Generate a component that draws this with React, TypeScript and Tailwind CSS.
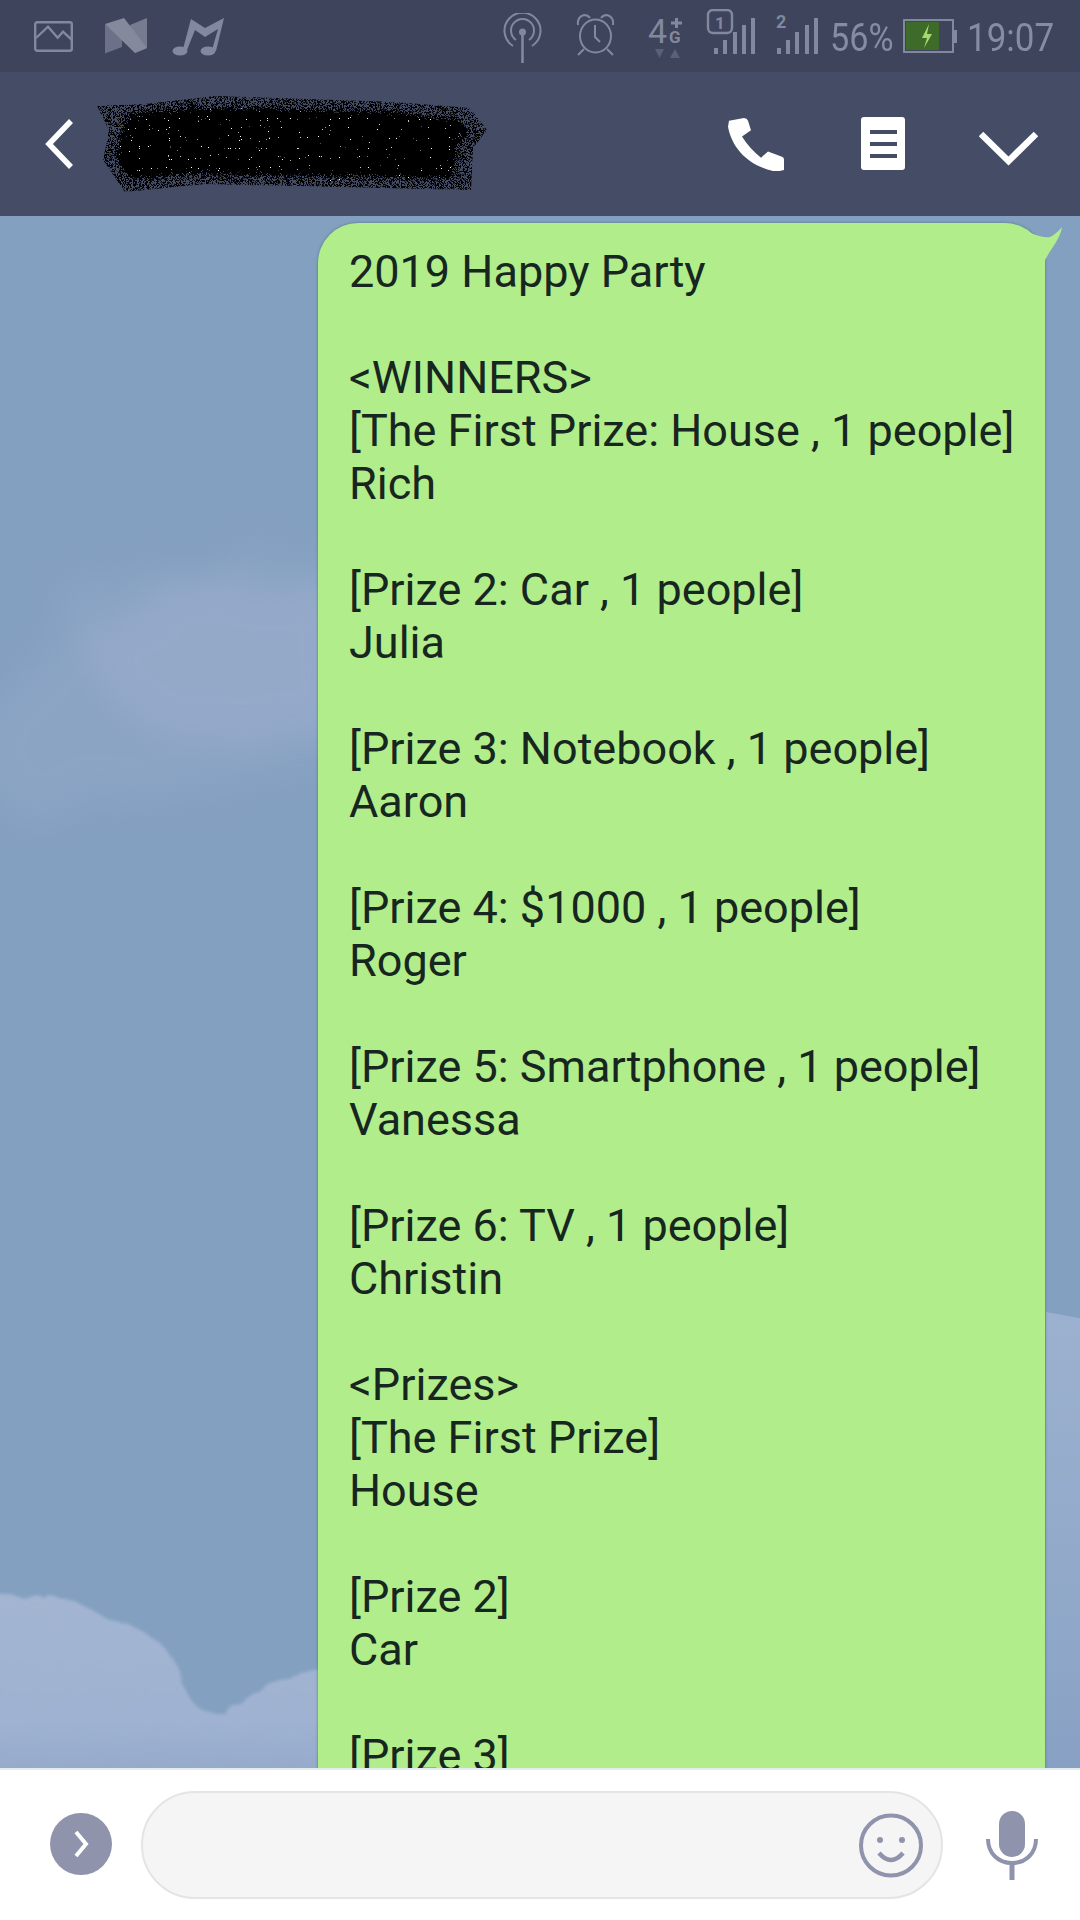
const ICON = '#82889d';

const MESSAGE = `2019 Happy Party

<WINNERS>
[The First Prize: House , 1 people]
Rich

[Prize 2: Car , 1 people]
Julia

[Prize 3: Notebook , 1 people]
Aaron

[Prize 4: $1000 , 1 people]
Roger

[Prize 5: Smartphone , 1 people]
Vanessa

[Prize 6: TV , 1 people]
Christin

<Prizes>
[The First Prize]
House

[Prize 2]
Car

[Prize 3]`;

function SignalBars({ xs, tops, bottom }: { xs: number[]; tops: number[]; bottom: number }) {
  return (
    <>
      {xs.map((x, i) => (
        <rect key={x} x={x} y={tops[i]} width="4" height={bottom - tops[i]} />
      ))}
    </>
  );
}

function StatusBar() {
  return (
    <div className="flex h-[72px] shrink-0 items-start bg-[#3e445b] pl-[34px] text-[#868ca1]">
      <svg className="mt-[21px]" width="39" height="31" viewBox="0 0 39 31" fill="none" stroke={ICON} strokeWidth="2.4">
        <rect x="1.2" y="1.2" width="36.6" height="28.6" rx="2" />
        <path d="M2 17 L14 5.7 L23.7 16.7 L29 10.7 L38 19" />
      </svg>
      <svg className="mt-[18px] ml-[32px]" width="43" height="36" viewBox="0 0 43 36">
        <path d="M25 7 L42 0 L42 30 L30 35 Z" fill="#767b90" />
        <path d="M0 6 L17 20 L17 29 L0 35.5 Z" fill="#6c7187" />
        <path d="M0 6 L19 0 L42 30 L30 35 Z" fill="#84899c" />
      </svg>
      <svg className="mt-[18px] ml-[24px]" width="52" height="38" viewBox="0 0 52 38" fill={ICON}>
        <ellipse cx="8" cy="33" rx="7.5" ry="4.5" />
        <ellipse cx="36" cy="33" rx="7.5" ry="4.5" />
        <path d="M11 31 L19 1 L33 10 L52 0 L44 33 L40 32 L46 11 L33 19 L23 12 L15 32 Z" />
      </svg>
      <svg className="mt-[13px] ml-[279px]" width="39" height="50" viewBox="0 0 39 50" fill="none" stroke={ICON} strokeWidth="2">
        <path d="M10 33 A18 18 0 1 1 29 33" />
        <path d="M13 27 A11.5 11.5 0 1 1 26 27" />
        <circle cx="19.5" cy="19" r="3.5" fill={ICON} stroke="none" />
        <path d="M19.5 20 L19.5 50" strokeWidth="2.6" />
      </svg>
      <svg className="mt-[14px] ml-[34px]" width="39" height="42" viewBox="0 0 39 42" fill="none" stroke={ICON} strokeWidth="2">
        <ellipse cx="19.5" cy="22" rx="15.5" ry="16.5" />
        <path d="M19 11 L19 23 L24 28" />
        <path d="M2 11 Q1 3 8 1 Q12 1 14 4 M37 11 Q38 3 31 1 Q27 1 25 4" />
        <path d="M8 35 L2 41 M31 35 L37 41" />
      </svg>
      <svg className="mt-[10px] ml-[33px]" width="37" height="50" viewBox="0 -8 37 50" fill={ICON}>
        <text x="0" y="25" fontFamily="Roboto, sans-serif" fontSize="34">4</text>
        <text x="21" y="25" fontFamily="Roboto, sans-serif" fontSize="17" fontWeight="700">G</text>
        <path d="M27 0 h3 v3.5 h4 v3 h-4 v3.5 h-3 v-3.5 h-4 v-3 h4 z" />
        <path d="M7 31 H16 L11.5 40 Z M22 40 H32 L27 31 Z" fill="#5a6075" />
      </svg>
      <svg className="mt-[9px] ml-[21px]" width="49" height="45" viewBox="0 0 49 45" fill={ICON}>
        <rect x="2" y="1" width="24" height="23" rx="5" fill="none" stroke={ICON} strokeWidth="2.4" />
        <text x="14" y="19.5" textAnchor="middle" fontFamily="Roboto, sans-serif" fontSize="17" fontWeight="700">1</text>
        <SignalBars xs={[8, 17, 27, 36, 45]} tops={[39, 31, 23, 16, 9]} bottom={45} />
      </svg>
      <svg className="mt-[9px] ml-[20px]" width="43" height="45" viewBox="0 -4 43 45" fill={ICON}>
        <text x="1" y="15" fontFamily="Roboto, sans-serif" fontSize="18" fontWeight="700">2</text>
        <SignalBars xs={[2, 11, 20, 30, 39]} tops={[35, 27, 19, 12, 5]} bottom={41} />
      </svg>
      <span className="mt-[18px] ml-[12px] w-[64px] origin-left scale-x-[0.9] font-['Roboto',sans-serif] text-[38px] leading-[40px] whitespace-nowrap">56%</span>
      <svg className="mt-[19px] ml-[9px]" width="54" height="34" viewBox="0 0 54 34">
        <rect x="1" y="1" width="49" height="32" fill="none" stroke={ICON} strokeWidth="2" />
        <rect x="3" y="3" width="33" height="28" fill="#3f6b2a" />
        <rect x="50" y="11" width="4" height="13" fill={ICON} />
        <path d="M26 5 L19 19 L24 19 L21 29 L29 15 L24 15 Z" fill="#a6d86f" />
      </svg>
      <span className="mt-[18px] ml-[10px] origin-left scale-x-[0.92] font-['Roboto',sans-serif] text-[38px] leading-[40px] whitespace-nowrap">19:07</span>
    </div>
  );
}

function Header() {
  return (
    <div className="flex h-[144px] shrink-0 items-start bg-[#454d66] pl-[45px]">
      <svg className="mt-[47px]" width="28" height="50" viewBox="0 0 28 50" fill="none" stroke="#fff" strokeWidth="5.5">
        <path d="M26 2 L4 25 L26 48" />
      </svg>
      {/* scribbled-out contact name */}
      <svg className="mt-[22px] ml-[22px]" width="394" height="100" viewBox="0 0 394 100">
        <defs>
          <filter id="scribble" x="-5%" y="-15%" width="110%" height="130%">
            <feTurbulence type="fractalNoise" baseFrequency="1.1" numOctaves="2" seed="4" result="noise" />
            <feDisplacementMap in="SourceGraphic" in2="noise" scale="18" result="shape" />
            <feTurbulence type="fractalNoise" baseFrequency="0.9" numOctaves="1" seed="9" />
            <feColorMatrix values="0 0 0 0 1  0 0 0 0 1  0 0 0 0 1  0 0 0 -30 8.2" result="specks" />
            <feComposite in="specks" in2="shape" operator="in" result="dots" />
            <feMerge>
              <feMergeNode in="shape" />
              <feMergeNode in="dots" />
            </feMerge>
          </filter>
          <filter id="grain" x="-5%" y="-15%" width="110%" height="130%">
            <feTurbulence type="fractalNoise" baseFrequency="1.4" numOctaves="1" seed="2" />
            <feColorMatrix values="0 0 0 0 0  0 0 0 0 0  0 0 0 0 0  0 0 0 -14 7.4" result="dots" />
            <feComposite in="dots" in2="SourceAlpha" operator="in" />
          </filter>
        </defs>
        <path d="M2 12 L50 10 L120 2 L300 8 L375 14 L392 36 L378 54 L376 96 L110 90 L30 98 L8 66 L14 36 Z" fill="#000" filter="url(#grain)" />
        <path d="M34 20 L100 14 L130 14 L300 18 L362 26 L376 38 L362 50 L358 84 L100 80 L36 86 L20 62 L28 34 Z" fill="#000" filter="url(#scribble)" />
      </svg>
      <svg className="mt-[46px] ml-[238px]" width="57" height="53" viewBox="0 0 57 60" preserveAspectRatio="none" fill="#fff">
        <path d="M2 3 L17 0 Q20 0 21 3 L24 14 L15 21 Q22 34 34 45 L41 38 L55 44 Q57 45 57 47 L57 59 Q50 61 46 60 C22 54 5 35 1 10 Z" />
      </svg>
      <div className="mt-[45px] ml-[77px] flex h-[53px] w-[44px] flex-col items-center justify-center gap-[8px] rounded-[3px] bg-white">
        <div className="h-[4px] w-[27px] bg-[#454d66]" />
        <div className="h-[4px] w-[27px] bg-[#454d66]" />
        <div className="h-[4px] w-[27px] bg-[#454d66]" />
      </div>
      <svg className="mt-[59px] ml-[74px]" width="59" height="35" viewBox="0 0 59 35" fill="none" stroke="#fff" strokeWidth="6.5">
        <path d="M2 3 L29.5 30 L57 3" />
      </svg>
    </div>
  );
}

function SkyBackground() {
  return (
    <svg className="absolute inset-0" width="1080" height="1552" viewBox="0 216 1080 1552">
      <defs>
        <filter id="wisp" x="-30%" y="-30%" width="160%" height="160%">
          <feTurbulence type="fractalNoise" baseFrequency="0.018" numOctaves="3" seed="7" result="noise" />
          <feDisplacementMap in="SourceGraphic" in2="noise" scale="60" />
          <feGaussianBlur stdDeviation="16" />
        </filter>
        <filter id="edge" x="-5%" y="-5%" width="110%" height="110%">
          <feTurbulence type="fractalNoise" baseFrequency="0.05" numOctaves="2" seed="3" result="noise" />
          <feDisplacementMap in="SourceGraphic" in2="noise" scale="10" />
          <feGaussianBlur stdDeviation="1.5" />
        </filter>
        <linearGradient id="lowCloud" x1="0" y1="0" x2="0" y2="1">
          <stop offset="0" stopColor="#a2b5d1" />
          <stop offset="0.7" stopColor="#9fb2d1" />
          <stop offset="1" stopColor="#95a9ca" />
        </linearGradient>
        <linearGradient id="rightCloud" x1="0" y1="0" x2="0" y2="1">
          <stop offset="0" stopColor="#9cb1cf" />
          <stop offset="0.7" stopColor="#8fa7c8" />
          <stop offset="1" stopColor="#87a0c3" />
        </linearGradient>
      </defs>
      <path d="M-20 720 C40 660 70 590 110 570 C150 570 190 580 230 570 C270 560 300 555 340 555 L340 750 C260 780 170 790 100 805 C40 820 10 810 -20 780 Z" fill="#93a8c8" opacity="0.55" filter="url(#wisp)" />
      <path d="M90 640 C130 590 190 590 240 590 C280 580 310 580 340 580 L340 720 C280 745 200 745 150 730 C120 715 100 680 90 640 Z" fill="#97abca" opacity="0.8" filter="url(#wisp)" />
      <path d="M-10 1590 C20 1605 40 1592 70 1600 C90 1608 100 1618 130 1625 C165 1640 178 1660 183 1685 C190 1705 205 1716 225 1714 C255 1690 285 1672 330 1668 L330 1775 L-10 1775 Z" fill="url(#lowCloud)" filter="url(#edge)" />
      <path d="M1046 1312 L1090 1320 L1090 1775 L1046 1775 Z" fill="url(#rightCloud)" />
    </svg>
  );
}

function Bubble() {
  return (
    <div className="relative mt-[7px] ml-[318px] h-[1700px] w-[727px] rounded-t-[40px] bg-[#b1ed8a] pt-[22px] pl-[31px] shadow-[0_0_3px_rgba(60,110,110,0.8)]">
      <svg className="absolute top-0 left-[686px]" width="60" height="42" viewBox="0 0 60 42" fill="#b1ed8a">
        <path d="M0 0 C10 2 20 8 27 10 C33 13 42 15 46 14 C50 12 55 8 58 4 C56 16 48 24 41 37 L41 42 L0 42 Z" />
      </svg>
      <p className="relative font-['Roboto',sans-serif] text-[45px] leading-[53px] whitespace-pre-line text-[#17261f]">
        {MESSAGE}
      </p>
    </div>
  );
}

function InputBar() {
  return (
    <div className="flex h-[152px] shrink-0 items-center border-t-2 border-[#e4ebee] bg-white pl-[50px]">
      <div className="mt-[-2px] flex h-[62px] w-[62px] items-center justify-center rounded-full bg-[#8f93ab]">
        <svg width="18" height="30" viewBox="0 0 18 30" fill="none" stroke="#fff" strokeWidth="4">
          <path d="M4 3 L14 15 L4 27" />
        </svg>
      </div>
      <div className="ml-[29px] flex h-[108px] w-[802px] items-center justify-end rounded-full border-2 border-[#e4e4e6] bg-[#f5f5f6] pr-[18px]">
        <svg width="64" height="65" viewBox="0 0 64 65" fill="none" stroke="#8f93ab" strokeWidth="4">
          <circle cx="32" cy="32.5" r="30" />
          <circle cx="21" cy="27" r="3" fill="#8f93ab" stroke="none" />
          <circle cx="43" cy="27" r="3" fill="#8f93ab" stroke="none" />
          <path d="M20 40 Q32 54 44 40" strokeWidth="4.5" />
        </svg>
      </div>
      <svg className="ml-[43px]" width="52" height="69" viewBox="0 0 52 69" fill="none" stroke="#8f93ab">
        <rect x="13" y="0" width="26" height="46" rx="13" fill="#8f93ab" stroke="none" />
        <path d="M2 28 C2 42 12 52 26 52 C40 52 50 42 50 28" strokeWidth="4" />
        <path d="M26 52 L26 69" strokeWidth="5" />
      </svg>
    </div>
  );
}

export default function App() {
  return (
    <div className="flex h-[1920px] w-[1080px] flex-col overflow-hidden">
      <StatusBar />
      <Header />
      <div className="relative flex-1 overflow-hidden bg-[#84a0c1]">
        <SkyBackground />
        <Bubble />
      </div>
      <InputBar />
    </div>
  );
}
